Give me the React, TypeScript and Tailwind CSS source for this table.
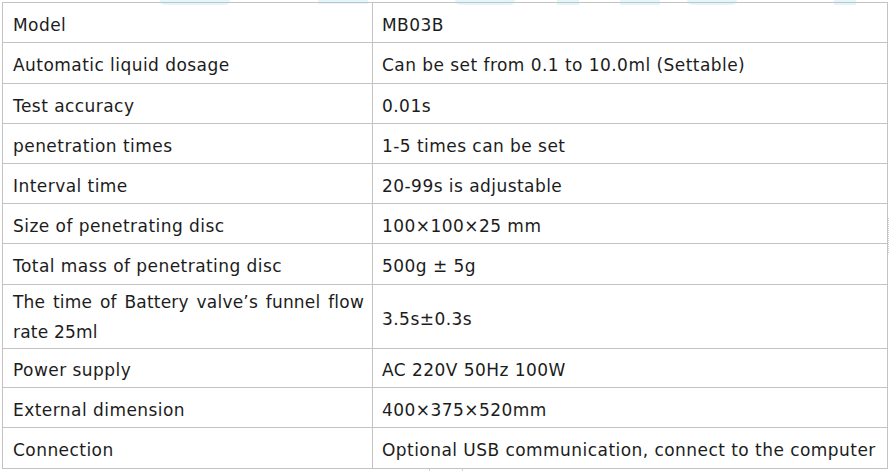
import React from "react";

const rows: { k: React.ReactNode; v: string; h: string; tall?: boolean }[] = [
  { k: "Model", v: "MB03B", h: "h-[40px]" },
  { k: "Automatic liquid dosage", v: "Can be set from 0.1 to 10.0ml (Settable)", h: "h-[41px]" },
  { k: "Test accuracy", v: "0.01s", h: "h-[40px]" },
  { k: "penetration times", v: "1-5 times can be set", h: "h-[40px]" },
  { k: "Interval time", v: "20-99s is adjustable", h: "h-[40px]" },
  { k: "Size of penetrating disc", v: "100×100×25 mm", h: "h-[40px]" },
  { k: "Total mass of penetrating disc", v: "500g ± 5g", h: "h-[41px]" },
  { k: "The time of Battery valve’s funnel flow rate 25ml", v: "3.5s±0.3s", h: "h-[64px]", tall: true },
  { k: "Power supply", v: "AC 220V 50Hz 100W", h: "h-[39px]" },
  { k: "External dimension", v: "400×375×520mm", h: "h-[40px]" },
  { k: "Connection", v: "Optional USB communication, connect to the computer", h: "h-[41px]" },
];

export default function App() {
  return (
    <div className="relative w-[890px] h-[471px] bg-white overflow-hidden text-[#1c1c1c] font-['DejaVu_Sans',sans-serif]">
      {/* watermark remnants behind the table */}
      <div className="absolute top-0 left-0 flex items-start">
        <div className="ml-[160px] w-[70px] h-[5px] rounded-b-full bg-[#e3f6fb]" />
        <div className="ml-[88px] w-[50px] h-[4px] bg-[#e3f6fb]" />
        <div className="ml-[87px] w-[60px] h-[5px] rounded-b-full bg-[#e3f6fb]" />
        <div className="ml-[42px] w-[22px] h-[5px] bg-[#e3f6fb]" />
        <div className="ml-[41px] w-[40px] h-[5px] bg-[#e3f6fb]" />
        <div className="ml-[27px] w-[50px] h-[5px] rounded-b-full bg-[#e3f6fb]" />
        <div className="ml-[97px] w-[22px] h-[5px] bg-[#e3f6fb]" />
      </div>

      <div className="relative ml-[2px] mt-[2px] w-[886px] border-t border-l border-r border-[#c3c3c3] text-[17px] tracking-[0.45px]">
        {rows.map((r, i) => (
          <div key={i} className={`flex border-b border-[#c3c3c3] ${r.h}`}>
            <div className={`w-[370px] shrink-0 border-r border-[#c3c3c3] flex items-center pl-[10px] pr-[8px] ${r.tall ? "" : "pt-[5px]"}`}>
              {r.tall ? (
                <div className="text-justify [text-align-last:left] leading-[30px] tracking-[0.2px]">{r.k}</div>
              ) : (
                <span className="leading-none">{r.k}</span>
              )}
            </div>
            <div className="flex-1 flex items-center pl-[9px] pt-[5px]">
              <span className="leading-none">{r.v}</span>
            </div>
          </div>
        ))}
        {/* small artifacts outside the table edge */}
        <div className="absolute right-[-2px] top-[215px] h-[35px] border-l border-dotted border-[#d0d0d0]" />
        <div className="absolute left-[426px] bottom-[-3px] w-[34px] h-[3px] border-l border-r border-[#d0d0d0]" />
      </div>
    </div>
  );
}
